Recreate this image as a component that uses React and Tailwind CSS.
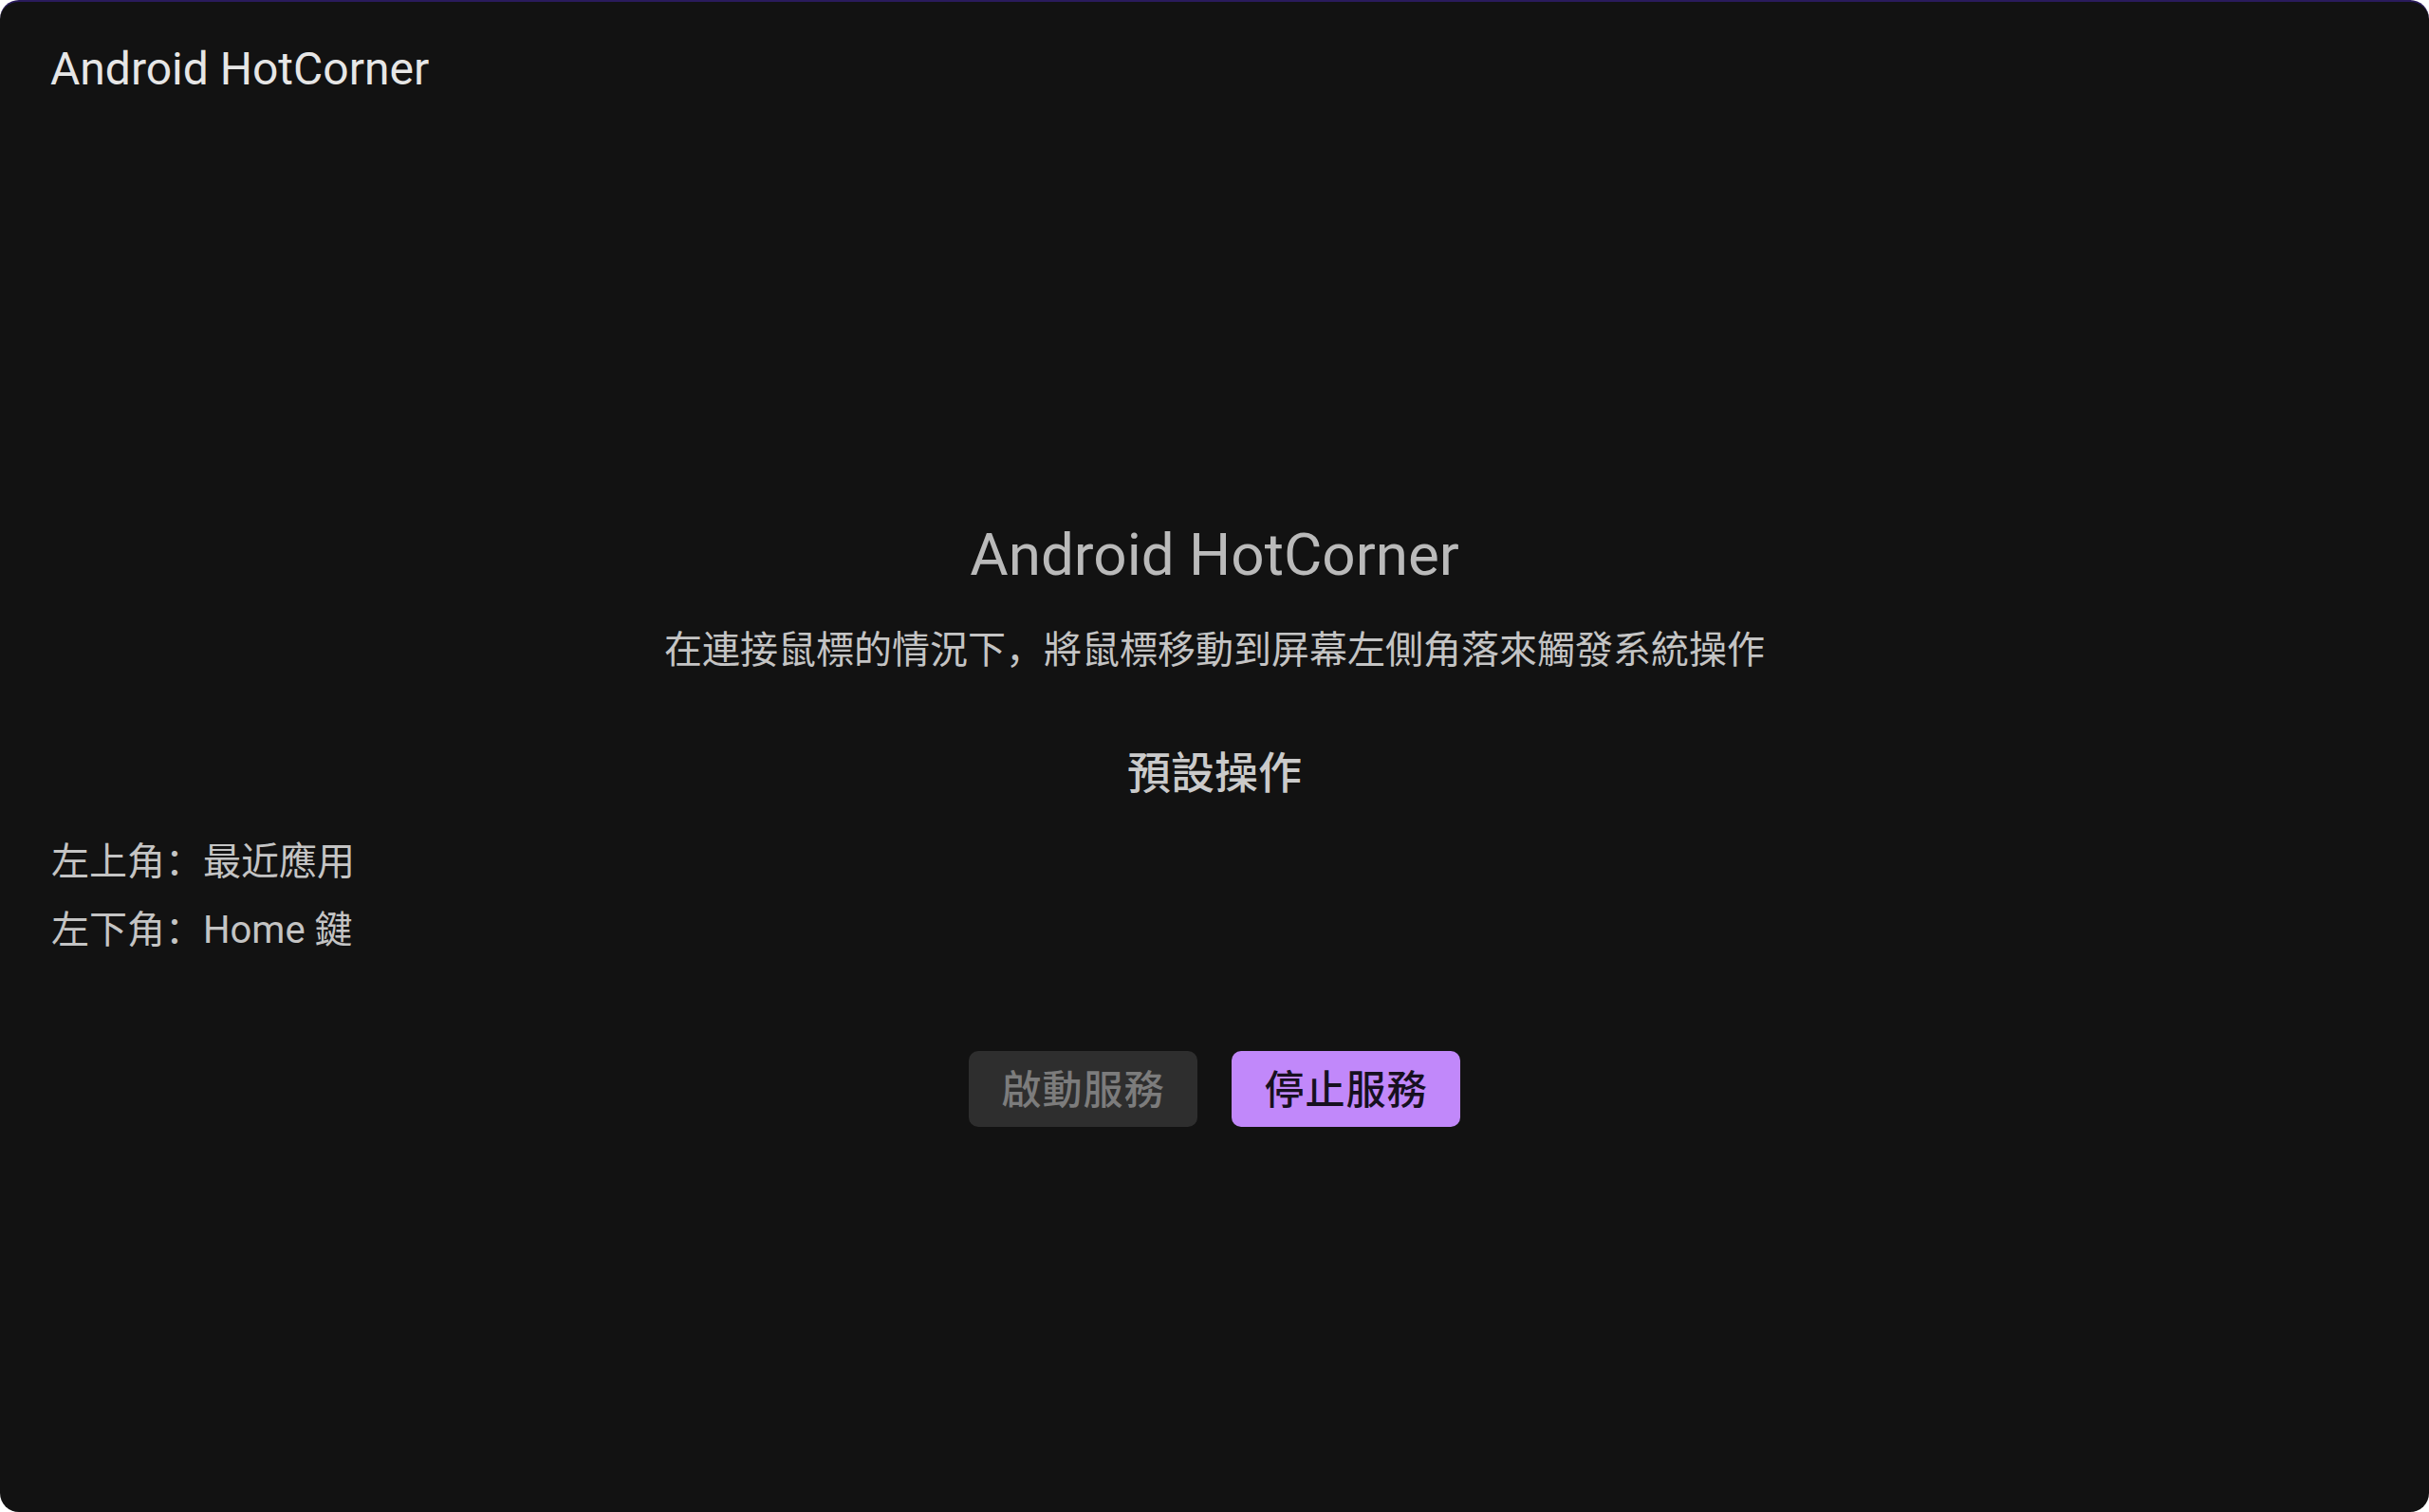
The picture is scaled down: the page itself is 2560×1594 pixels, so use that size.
import React from 'react';

const latin = "font-['Roboto','Noto_Sans_CJK_SC',sans-serif]";

const actions = [
  { corner: '左上角：', action: '最近應用' },
  { corner: '左下角：', action: 'Home 鍵' },
];

export default function App() {
  return (
    <div className="w-full h-[1594px] bg-white">
      <div className={`h-full flex flex-col rounded-[20px] overflow-hidden bg-[#121212] border-t-2 border-[#2a1b5c] ${latin}`}>
        {/* top bar */}
        <header className="pt-[47px] pl-[53px]">
          <h1 className="text-[48px] leading-none text-[#e6e6e6]">Android HotCorner</h1>
        </header>

        <main className="flex flex-col pt-[457px]">
          <div className="flex flex-col items-center">
            <h2 className="text-[62px] leading-none text-[#bababa]">Android HotCorner</h2>
            <p className="mt-[50px] text-[40px] leading-none text-[#c4c4c4]">
              在連接鼠標的情況下，將鼠標移動到屏幕左側角落來觸發系統操作
            </p>
            <h3 className="mt-[86px] text-[46px] leading-none font-medium text-[#cacaca]">預設操作</h3>
          </div>

          <ul className="mt-[51px] pl-[54px] flex flex-col gap-[32px] text-[40px] leading-none text-[#c4c4c4]">
            {actions.map(a => (
              <li key={a.corner}>
                {a.corner}{a.action}
              </li>
            ))}
          </ul>

          <div className="mt-[107px] flex justify-center gap-[36px]">
            <button
              disabled
              className="w-[241px] h-[80px] pt-[3px] rounded-[10px] bg-[#2e2e2e] text-[#7c7c7c] text-[42px] leading-none font-medium tracking-[1px] flex items-center justify-center"
            >
              啟動服務
            </button>
            <button className="w-[241px] h-[80px] pt-[3px] rounded-[10px] bg-[#c188fa] text-[#17101f] text-[42px] leading-none font-medium tracking-[1px] flex items-center justify-center">
              停止服務
            </button>
          </div>
        </main>
      </div>
    </div>
  );
}
